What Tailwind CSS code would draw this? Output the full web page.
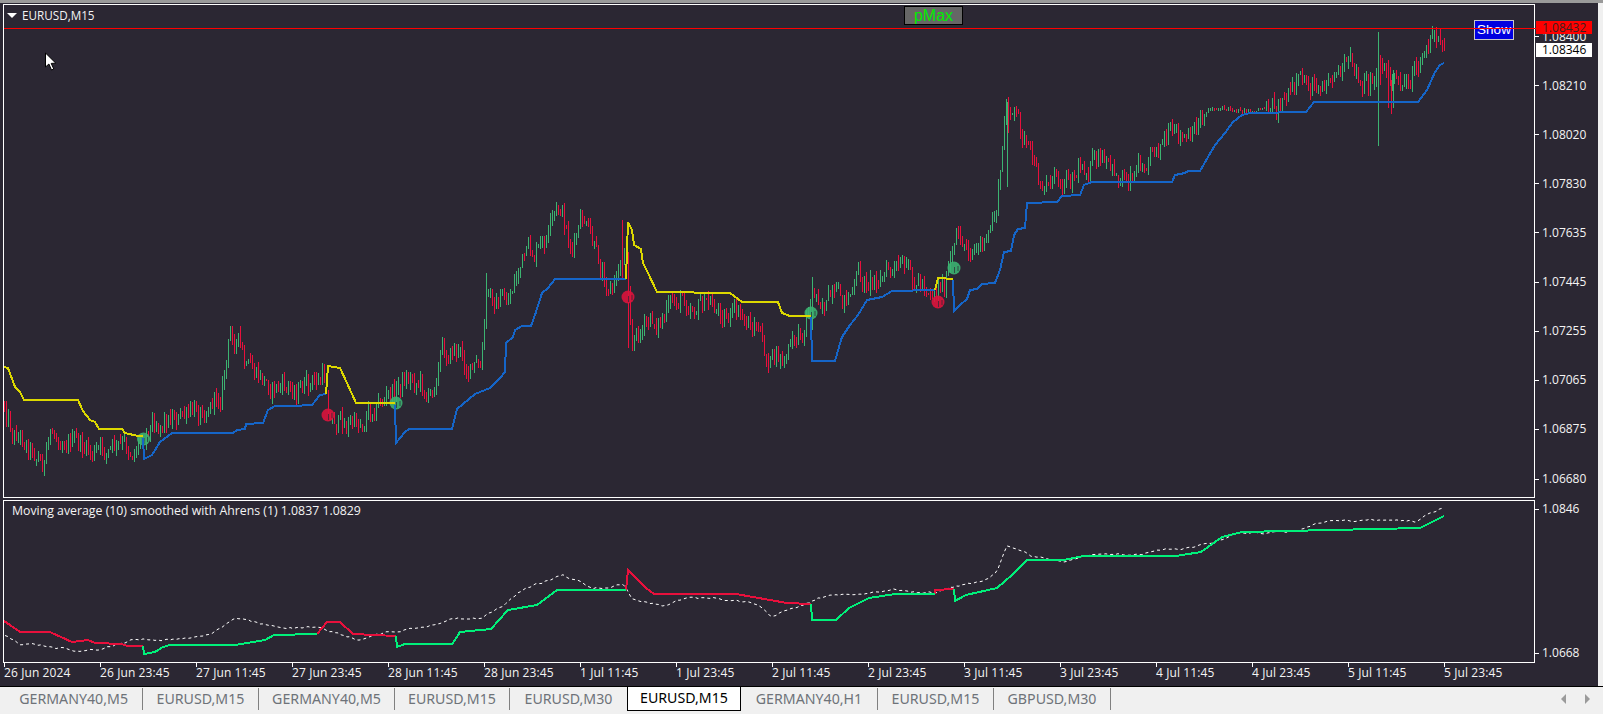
<!DOCTYPE html>
<html lang="en">
<head>
    <meta charset="UTF-8">
    <title>EURUSD,M15</title>
    <script src="https://cdn.jsdelivr.net/npm/@tailwindcss/browser@4"></script>
</head>
<body class="bg-[#f0f0f0]">
<div class="relative w-[1603px] h-[714px] overflow-hidden flex flex-col font-['Open_Sans',sans-serif] text-[12px] leading-none text-[#f4f4f4]">
    <div class="h-[3px] bg-[#9a9a9a]"></div>

    <!-- chart windows -->
    <div class="w-[1598px] h-[683px] bg-[#2b2733] pt-[1px] pl-[3px]">
        <div class="flex h-[494px]">
            <div class="relative w-[1532px] border border-white">
                <div class="flex items-center gap-[5px] pl-[3px] pt-[5px]">
                    <span class="w-0 h-0 border-x-[5px] border-x-transparent border-t-[5px] border-t-white"></span>
                    <span class="text-[11.7px]">EURUSD,M15</span>
                </div>
                <div class="absolute left-[900px] top-[1px] w-[59px] h-[19px] bg-[#666666] border border-black flex items-center justify-center text-[#00ee00] text-[16px] font-['Liberation_Sans',sans-serif]">pMax</div>
                <div class="absolute left-[1470px] top-[15px] w-[40px] h-[20px] bg-[#0000e0] border border-[#c8c8c8] flex items-center justify-center text-white text-[13.5px] font-['Liberation_Sans',sans-serif]">Show</div>
            </div>
            <!-- price scale -->
            <div class="relative flex-1 flex flex-col pt-[8px]">
                <div class="h-[49.1px] shrink-0 flex items-center gap-[3px]"><i class="w-[4px] h-px bg-white"></i>1.08400</div>
                <div class="h-[49.1px] shrink-0 flex items-center gap-[3px]"><i class="w-[4px] h-px bg-white"></i>1.08210</div>
                <div class="h-[49.1px] shrink-0 flex items-center gap-[3px]"><i class="w-[4px] h-px bg-white"></i>1.08020</div>
                <div class="h-[49.1px] shrink-0 flex items-center gap-[3px]"><i class="w-[4px] h-px bg-white"></i>1.07830</div>
                <div class="h-[49.1px] shrink-0 flex items-center gap-[3px]"><i class="w-[4px] h-px bg-white"></i>1.07635</div>
                <div class="h-[49.1px] shrink-0 flex items-center gap-[3px]"><i class="w-[4px] h-px bg-white"></i>1.07445</div>
                <div class="h-[49.1px] shrink-0 flex items-center gap-[3px]"><i class="w-[4px] h-px bg-white"></i>1.07255</div>
                <div class="h-[49.1px] shrink-0 flex items-center gap-[3px]"><i class="w-[4px] h-px bg-white"></i>1.07065</div>
                <div class="h-[49.1px] shrink-0 flex items-center gap-[3px]"><i class="w-[4px] h-px bg-white"></i>1.06875</div>
                <div class="h-[40px] shrink-0 flex items-start gap-[3px] pt-[19px]"><i class="w-[4px] h-px bg-white mt-[6px]"></i>1.06680</div>
                <div class="absolute left-px top-[17px] w-[56px] h-[13px] bg-[#ff0000] text-[#3a2020] flex items-center pl-[6px]">1.08432</div>
                <div class="absolute left-px top-[39px] w-[56px] h-[14px] bg-white text-black flex items-center pl-[6px]">1.08346</div>
            </div>
        </div>
        <div class="flex h-[163px] mt-[2px]">
            <div class="w-[1532px] border border-white pl-[8px] pt-[4px] text-[12.3px]">Moving average (10) smoothed with Ahrens (1) 1.0837 1.0829</div>
            <div class="flex-1 flex flex-col justify-between pb-[1px]">
                <div class="flex items-center gap-[3px] h-[18px]"><i class="w-[4px] h-px bg-white"></i>1.0846</div>
                <div class="flex items-center gap-[3px] h-[18px]"><i class="w-[4px] h-px bg-white"></i>1.0668</div>
            </div>
        </div>
        <!-- time scale -->
        <div class="flex pl-px tracking-[0.1px]">
            <div class="w-[96px] shrink-0"><i class="block w-px h-[4px] bg-white"></i><span class="block whitespace-nowrap">26 Jun 2024</span></div>
            <div class="w-[96px] shrink-0"><i class="block w-px h-[4px] bg-white"></i><span class="block whitespace-nowrap">26 Jun 23:45</span></div>
            <div class="w-[96px] shrink-0"><i class="block w-px h-[4px] bg-white"></i><span class="block whitespace-nowrap">27 Jun 11:45</span></div>
            <div class="w-[96px] shrink-0"><i class="block w-px h-[4px] bg-white"></i><span class="block whitespace-nowrap">27 Jun 23:45</span></div>
            <div class="w-[96px] shrink-0"><i class="block w-px h-[4px] bg-white"></i><span class="block whitespace-nowrap">28 Jun 11:45</span></div>
            <div class="w-[96px] shrink-0"><i class="block w-px h-[4px] bg-white"></i><span class="block whitespace-nowrap">28 Jun 23:45</span></div>
            <div class="w-[96px] shrink-0"><i class="block w-px h-[4px] bg-white"></i><span class="block whitespace-nowrap">1 Jul 11:45</span></div>
            <div class="w-[96px] shrink-0"><i class="block w-px h-[4px] bg-white"></i><span class="block whitespace-nowrap">1 Jul 23:45</span></div>
            <div class="w-[96px] shrink-0"><i class="block w-px h-[4px] bg-white"></i><span class="block whitespace-nowrap">2 Jul 11:45</span></div>
            <div class="w-[96px] shrink-0"><i class="block w-px h-[4px] bg-white"></i><span class="block whitespace-nowrap">2 Jul 23:45</span></div>
            <div class="w-[96px] shrink-0"><i class="block w-px h-[4px] bg-white"></i><span class="block whitespace-nowrap">3 Jul 11:45</span></div>
            <div class="w-[96px] shrink-0"><i class="block w-px h-[4px] bg-white"></i><span class="block whitespace-nowrap">3 Jul 23:45</span></div>
            <div class="w-[96px] shrink-0"><i class="block w-px h-[4px] bg-white"></i><span class="block whitespace-nowrap">4 Jul 11:45</span></div>
            <div class="w-[96px] shrink-0"><i class="block w-px h-[4px] bg-white"></i><span class="block whitespace-nowrap">4 Jul 23:45</span></div>
            <div class="w-[96px] shrink-0"><i class="block w-px h-[4px] bg-white"></i><span class="block whitespace-nowrap">5 Jul 11:45</span></div>
            <div class="w-[96px] shrink-0"><i class="block w-px h-[4px] bg-white"></i><span class="block whitespace-nowrap">5 Jul 23:45</span></div>
        </div>
    </div>

    <!-- tabs -->
    <div class="flex h-[25px] border-t border-black bg-[#f0f0f0] text-[14.2px] text-[#6e7379] font-['Noto_Sans',sans-serif]">
        <div class="w-[143px] h-[22px] mt-[1px] border-r border-[#808080] flex items-center justify-end pr-[14px]">GERMANY40,M5</div>
        <div class="w-[116px] h-[22px] mt-[1px] border-r border-[#808080] flex items-center justify-center">EURUSD,M15</div>
        <div class="w-[136px] h-[22px] mt-[1px] border-r border-[#808080] flex items-center justify-center">GERMANY40,M5</div>
        <div class="w-[115px] h-[22px] mt-[1px] border-r border-[#808080] flex items-center justify-center">EURUSD,M15</div>
        <div class="w-[117px] h-[22px] mt-[1px] flex items-center justify-center">EURUSD,M30</div>
        <div class="w-[114px] h-[24px] bg-white border-x border-b border-black text-black flex items-center justify-center">EURUSD,M15</div>
        <div class="w-[137px] h-[22px] mt-[1px] border-r border-[#808080] flex items-center justify-center">GERMANY40,H1</div>
        <div class="w-[116px] h-[22px] mt-[1px] border-r border-[#808080] flex items-center justify-center">EURUSD,M15</div>
        <div class="w-[117px] h-[22px] mt-[1px] border-r border-[#808080] flex items-center justify-center">GBPUSD,M30</div>
        <div class="flex-1 flex items-center justify-end gap-[19px] pr-[13px]">
            <span class="w-0 h-0 border-y-[5px] border-y-transparent border-r-[5px] border-r-[#9a9a9a]"></span>
            <span class="w-0 h-0 border-y-[5px] border-y-transparent border-l-[5px] border-l-[#9a9a9a]"></span>
        </div>
    </div>

    <svg id="plot" class="absolute left-0 top-0 pointer-events-none" width="1603" height="714" viewBox="0 0 1603 714"></svg>
</div>

<script>
// all points are in full size pixels, except candle mid and the dashed line which were read off the small picture
const k = 1.0223;
const mid = [[4,395],[12,420],[25,430],[38,445],[42,455],[50,425],[65,425],[75,435],[90,445],[110,440],[130,440],[138,425],[145,412],[170,405],[185,410],[200,395],[215,385],[225,328],[232,328],[240,365],[260,375],[280,380],[300,380],[318,370],[322,405],[335,415],[350,415],[365,395],[385,385],[395,370],[410,370],[420,390],[430,345],[445,340],[460,360],[470,365],[476,290],[495,295],[510,255],[530,245],[548,205],[560,245],[570,215],[585,260],[600,280],[612,240],[618,330],[630,320],[650,310],[665,290],[690,298],[720,310],[740,320],[748,350],[765,355],[785,320],[795,285],[820,300],[840,275],[875,265],[890,275],[915,280],[925,275],[935,240],[965,240],[975,200],[985,98],[1000,130],[1015,180],[1040,170],[1070,158],[1095,175],[1115,160],[1130,135],[1165,140],[1180,105],[1225,108],[1250,100],[1275,85],[1320,65],[1340,85],[1350,60],[1365,85],[1385,70],[1403,35],[1412,45]];
const dash = [[5,622],[20,630],[45,632],[80,636],[100,634],[135,625],[180,625],[205,620],[230,605],[260,612],[310,615],[320,618],[350,625],[385,618],[415,612],[440,605],[470,605],[495,590],[510,578],[550,562],[580,575],[610,572],[618,585],[650,592],[670,585],[700,585],[740,590],[755,603],[785,590],[800,585],[830,580],[875,576],[915,580],[930,575],[960,568],[975,560],[985,535],[1010,545],[1040,548],[1070,542],[1110,542],[1165,535],[1185,530],[1215,520],[1260,520],[1300,510],[1350,508],[1385,510],[1395,502],[1410,497]];

const blue = [
  [[143,438],[144,459],[152,455],[160,442],[172,433],[233,433],[237,430],[245,429],[246,424],[263,423],[268,410],[275,406],[293,406],[312,405],[320,395],[326,394]],
  [[395,405],[396,443],[405,432],[409,429],[452,429],[457,409],[475,394],[490,388],[500,378],[505,372],[506,343],[513,337],[515,330],[522,326],[531,326],[535,315],[542,293],[548,288],[555,279],[626,279]],
  [[811,317],[812,361],[835,361],[839,347],[842,337],[850,325],[858,315],[867,300],[882,297],[892,291],[935,290]],
  [[953,280],[954,311],[960,305],[967,299],[970,290],[977,289],[982,284],[995,283],[1000,270],[1004,252],[1011,251],[1014,235],[1018,229],[1025,228],[1027,203],[1057,202],[1062,196],[1080,195],[1084,185],[1092,182],[1172,182],[1175,175],[1185,173],[1188,171],[1200,171],[1208,157],[1215,145],[1225,133],[1233,122],[1242,115],[1250,113],[1306,112],[1314,102],[1418,102],[1427,90],[1435,72],[1440,65],[1444,63]]
];
const yellow = [
  [[4,367],[8,368],[15,387],[20,392],[24,400],[78,400],[83,411],[90,420],[95,422],[99,429],[122,429],[125,433],[138,436],[143,436]],
  [[326,394],[328,366],[340,368],[347,383],[356,403],[395,403]],
  [[626,279],[628,222],[632,230],[634,245],[641,249],[643,263],[648,273],[657,292],[730,293],[742,302],[778,302],[782,313],[790,316],[811,316]],
  [[935,290],[938,278],[953,279]]
];
const maGreen = [
  [[143,646],[144,654],[155,652],[163,647],[170,645],[235,645],[247,643],[265,640],[274,635],[317,634]],
  [[396,636],[397,647],[405,644],[452,644],[455,640],[460,632],[491,629],[508,610],[537,605],[557,590],[626,590]],
  [[811,604],[812,620],[836,620],[849,608],[869,598],[895,594],[935,594]],
  [[954,589],[955,601],[966,595],[997,588],[1012,575],[1027,560],[1063,560],[1084,556],[1176,556],[1201,552],[1222,537],[1242,532],[1420,528],[1444,516]]
];
const maRed = [
  [[4,621],[10,625],[20,632],[50,632],[72,642],[88,640],[95,643],[122,644],[127,646],[143,646]],
  [[317,634],[327,622],[340,622],[353,634],[396,636]],
  [[626,590],[628,570],[646,588],[654,594],[736,594],[787,603],[811,604]],
  [[935,594],[935,590],[954,589]]
];
const circles = [[143.5,439,'#3cb371'],[328,415,'#dc143c'],[396,403,'#3cb371'],[628,297,'#dc143c'],[811,313,'#3cb371'],[938,302,'#dc143c'],[954,268,'#3cb371']];
// tall bars that the random walk would not give: x, top, bottom, colour
const tall = [[1378,32,146,'#3cb371'],[1380,55,85,'#e8103c'],[1388,60,108,'#e8103c'],[1391,80,114,'#e8103c'],[1393,70,108,'#3cb371'],[1007,102,187,'#3cb371'],[1008,97,133,'#e8103c'],[622,220,278,'#e8103c'],[628,277,348,'#e8103c'],[486,273,327,'#3cb371'],[812,277,330,'#3cb371'],[1444,38,51,'#e8103c']];

let seed = 12345;
function rnd() {
    seed = (seed * 1103515245 + 12345) & 0x7fffffff;
    return seed / 0x7fffffff;
}
function at(pts, x) {
    for (let i = 1; i < pts.length; i++) {
        if (x <= pts[i][0]) {
            const t = (x - pts[i-1][0]) / (pts[i][0] - pts[i-1][0]);
            return pts[i-1][1] + (pts[i][1] - pts[i-1][1]) * t;
        }
    }
    return pts[pts.length-1][1];
}
function line(pts, color, width) {
    const p = pts.map(q => q.join(',')).join(' ');
    return `<polyline points="${p}" fill="none" stroke="${color}" stroke-width="${width}" shape-rendering="crispEdges"/>`;
}

const midFull = mid.map(q => [q[0]*k, q[1]*k]);
const dashFull = dash.map(q => [q[0]*k, q[1]*k]);
let out = '';

// candles, one every 2 px
let prev = at(midFull, 4), wob = 0;
for (let x = 4; x < 1444; x += 2) {
    const quiet = (x > 1205 && x < 1265) ? 0.25 : 1;
    wob = wob*0.6 + (rnd()-0.5)*20*quiet;
    const c = at(midFull, x) + wob;
    const top = Math.min(prev, c) - rnd()*8*quiet;
    const bot = Math.max(prev, c) + rnd()*8*quiet;
    const col = c < prev ? '#3cb371' : '#e8103c';
    out += `<rect x="${x}" y="${Math.round(top)}" width="1" height="${Math.max(2, Math.round(bot-top))}" fill="${col}"/>`;
    prev = c;
}
for (const [x, t, b, col] of tall) {
    out += `<rect x="${x}" y="${t}" width="1" height="${b-t}" fill="${col}"/>`;
}

for (const [x, y, col] of circles) {
    out += `<circle cx="${x}" cy="${y}" r="6.5" fill="${col}" fill-opacity="0.9"/>`;
    out += `<path d="M${x+0.5} ${y+5}V${y-1}M${x+4} ${y+3}V${y-2}" fill="none" stroke="#2b2733" stroke-opacity="0.7" stroke-width="1"/>`;
}
blue.forEach(s => out += line(s, '#1565c8', 2));
yellow.forEach(s => out += line(s, '#dcd800', 2));

// red price line
out += `<rect x="4" y="28" width="1532" height="1" fill="#ff0000"/>`;

// lower window, the dashed line wobbles around the read points
let dashPts = [], dw = 0;
for (let x = 5; x <= 1442; x += 3) {
    dw = dw*0.8 + (rnd()-0.5)*2;
    dashPts.push(x + ',' + (at(dashFull, x) + dw).toFixed(1));
}
out += `<polyline points="${dashPts.join(' ')}" fill="none" stroke="#ffffff" stroke-width="1" stroke-dasharray="3 3"/>`;
maRed.forEach(s => out += line(s, '#e8103c', 2));
maGreen.forEach(s => out += line(s, '#00f07a', 2));

// mouse pointer
out += `<path d="M45.5 53V67l3.4-3 2.6 6 2.3-1-2.6-5.6 4.6-.2z" fill="#fff" stroke="#000" stroke-width="1"/>`;

document.getElementById('plot').innerHTML = out;
</script>
</body>
</html>
